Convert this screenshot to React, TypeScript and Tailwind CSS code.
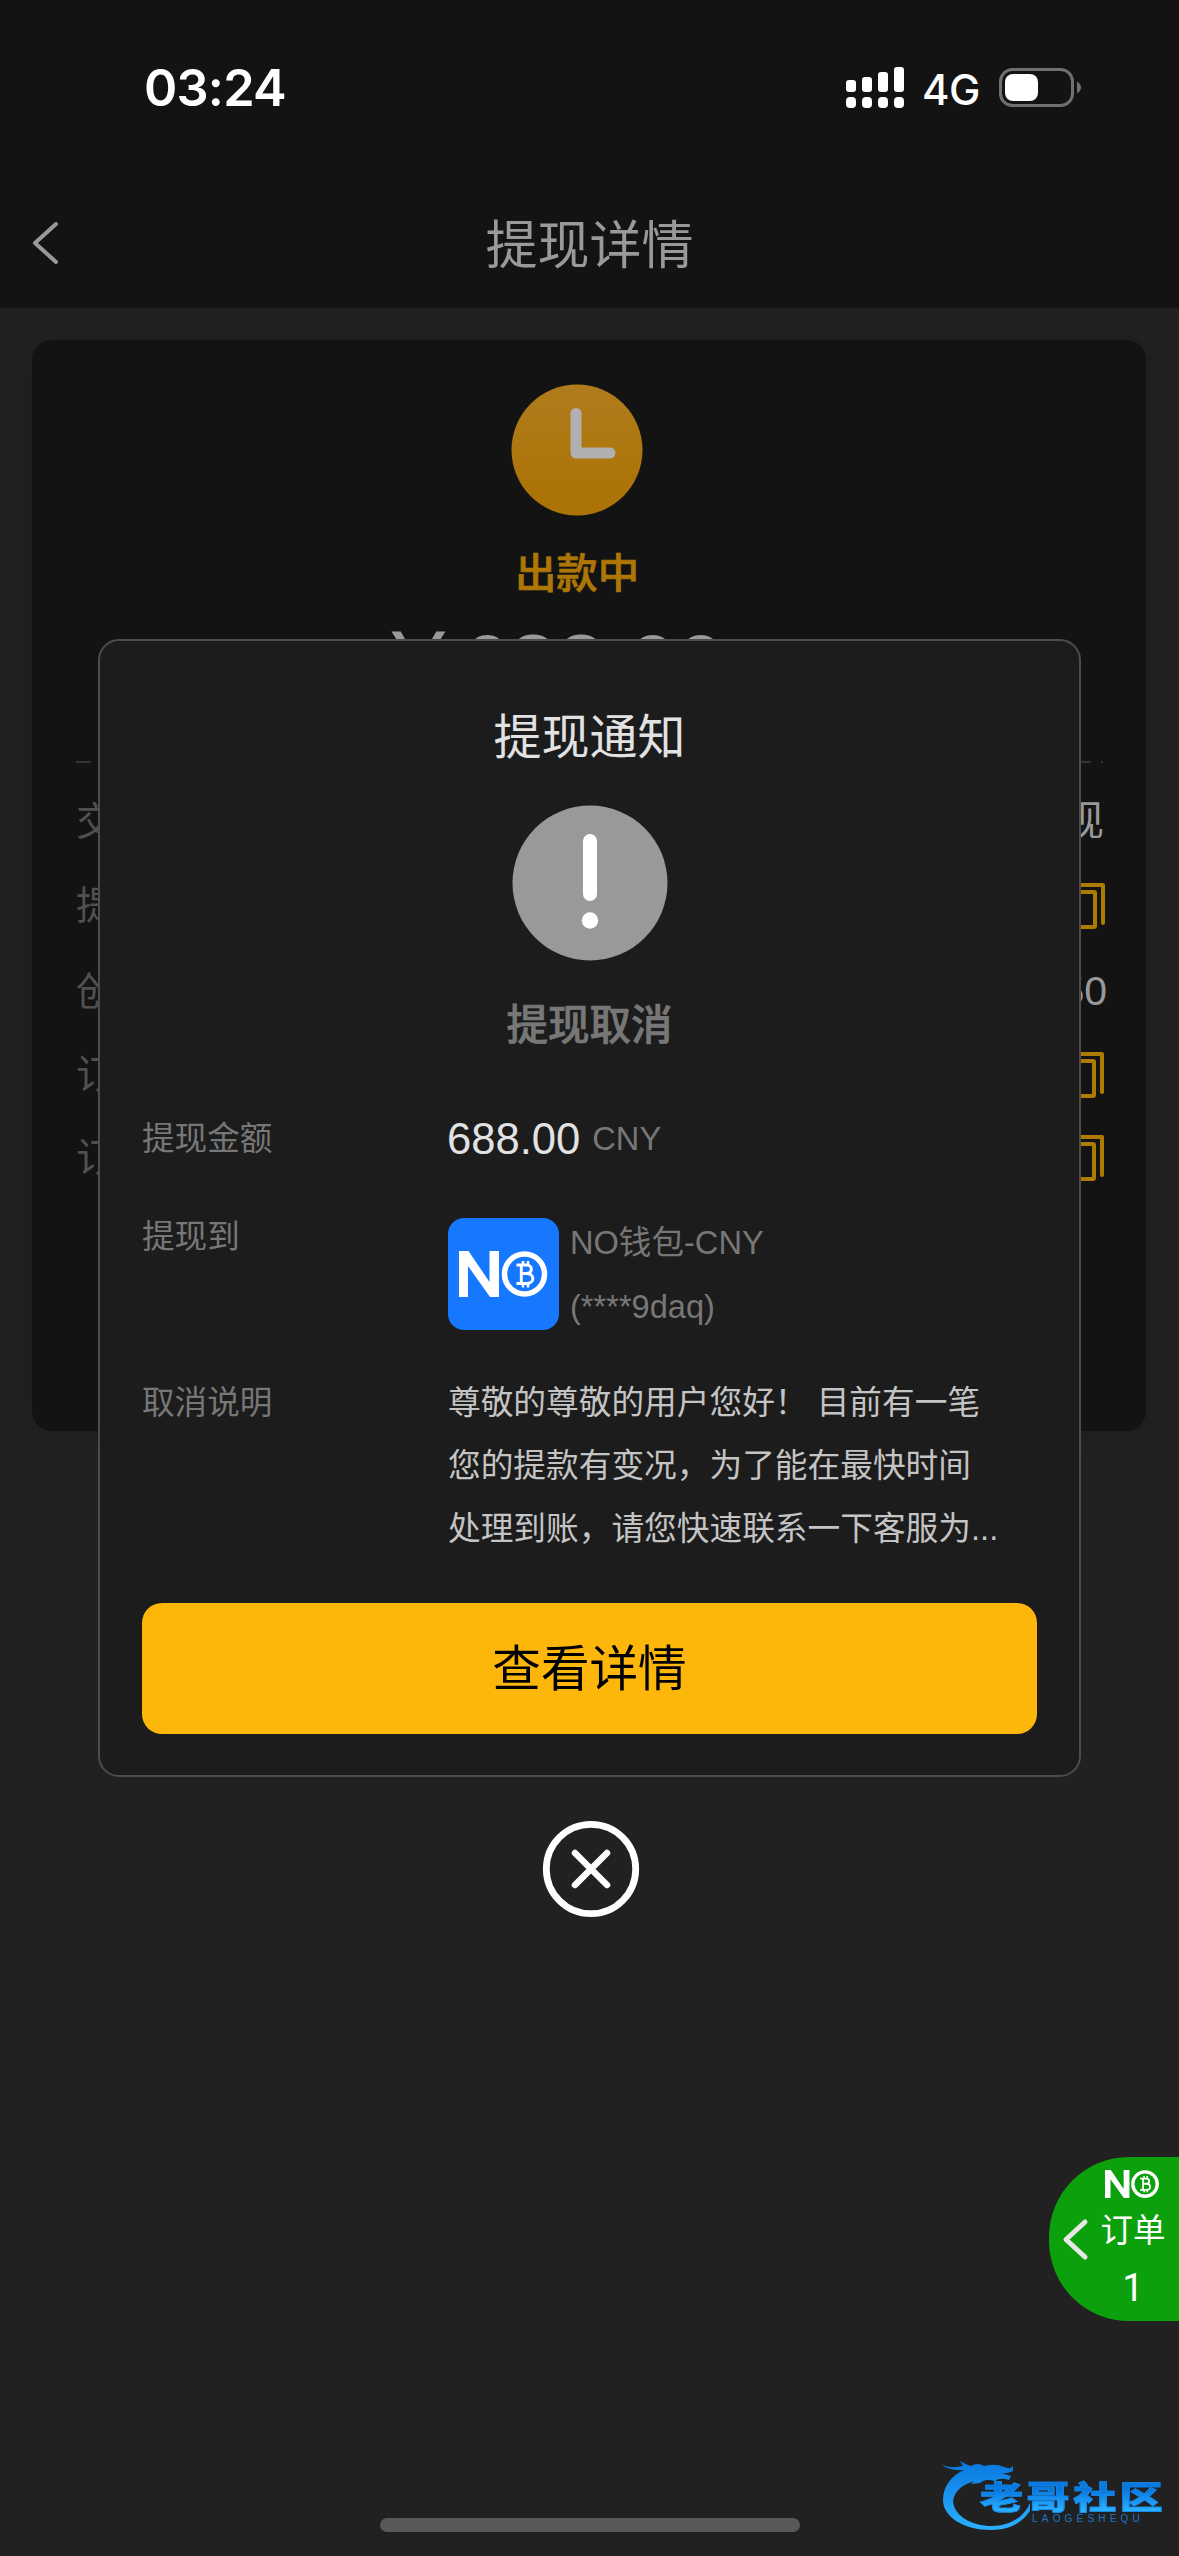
import React from "react";

const rows = [
  { id: "type", label: "交", value: "现", h: "h-[84px]", shift: "-mr-[2px]" },
  { id: "withdraw", label: "提", copy: true, h: "h-[84px]", shift: "-mr-[3px]" },
  { id: "created", label: "创", value: "50", h: "h-[88px]", shift: "-mr-[5px]" },
  { id: "order", label: "订", copy: true, h: "h-[78px]", shift: "-mr-[2px]" },
  { id: "serial", label: "订", copy: true, h: "h-[88px]", shift: "-mr-[2px]" },
];

function CopyIcon({ className }: { className: string }) {
  return (
    <svg className={className} width="40" height="48" viewBox="0 0 40 48" fill="none" stroke="#ad7b00" strokeWidth="4">
      <path d="M8 3H38V41" strokeLinejoin="round" strokeLinecap="round" />
      <rect x="2" y="10" width="28" height="35" rx="1" />
    </svg>
  );
}

function NoMark({ className }: { className: string }) {
  return (
    <svg viewBox="0 0 90 46" className={className} fill="none">
      <path d="M0 0H9.500L30.500 31V0H40V46H31L9 15V46H0Z" fill="#fff" />
      <circle cx="65.500" cy="23" r="20" stroke="#fff" strokeWidth="5.500" />
      <g stroke="#fff" strokeWidth="2.900">
        <path d="M57.500 14H67.500C74 14 74 22.500 67.500 22.500H62M67.500 22.500C76 22.500 76 32.500 67.500 32.500H57.500M62.300 14V32.500" />
        <path d="M64 10V14M69 10V14M64 32.500V36.500M69 32.500V36.500" strokeWidth="2.500" />
      </g>
    </svg>
  );
}

function StatusBar() {
  return (
    <div className="flex h-[186px] items-start">
      <div className="ml-[144px] mt-[57px] w-[150px] font-['Inter'] text-[50.500px] font-semibold leading-[62px] tracking-[-0.800px] text-white">03:24</div>
      <svg className="ml-[552px] mt-[66px]" width="58" height="43" viewBox="0 0 58 43" fill="#fff">
        <rect x="0" y="14" width="10" height="12" rx="3" />
        <rect x="16" y="11" width="10" height="15" rx="3" />
        <rect x="32" y="6" width="10" height="20" rx="3" />
        <rect x="48" y="1" width="10" height="25" rx="3" />
        <rect x="0" y="31" width="10" height="11" rx="4" />
        <rect x="16" y="31" width="10" height="11" rx="4" />
        <rect x="32" y="31" width="10" height="11" rx="4" />
        <rect x="48" y="31" width="10" height="11" rx="4" />
      </svg>
      <div className="ml-[18px] mt-[64px] w-[77px] font-['Inter'] text-[42px] font-medium leading-[51px] tracking-[-0.500px] text-white">4G</div>
      <svg className="mt-[67px]" width="84" height="42" viewBox="0 0 84 42">
        <rect x="1.500" y="2.500" width="72" height="36" rx="12" fill="none" stroke="#707070" strokeWidth="3" />
        <rect x="6" y="7" width="33" height="27" rx="8" fill="#fff" />
        <path d="M78 14.500Q82 17 82 20.500T78 26.500Z" fill="#707070" />
      </svg>
    </div>
  );
}

function Page() {
  return (
    <div className="flex h-full flex-col">
      <header className="h-[308px] bg-[#131313]">
        <StatusBar />
        <div className="grid h-[118px] grid-cols-[120px_1fr_120px] items-center">
          <svg className="-mt-[4px] ml-[31px]" width="28" height="46" viewBox="0 0 28 46" fill="none" stroke="#999" strokeWidth="4" strokeLinecap="round" strokeLinejoin="round">
            <path d="M25 4L4 23L25 42" />
          </svg>
          <h1 className="pt-[2px] text-center text-[52px] leading-[60px] text-[#999]">提现详情</h1>
        </div>
      </header>
      <section className="mx-[32px] mt-[32px] h-[1091px] w-[1114px] rounded-[20px] bg-[#131313] px-[44px] pt-[44px] shadow-[0_0_24px_rgba(0,0,0,0.12)]">
        <div className="mr-[24px] flex flex-col items-center">
          <svg width="132" height="132" viewBox="0 0 132 132">
            <defs>
              <linearGradient id="clock" x1="0" y1="0" x2="0" y2="1">
                <stop offset="0" stopColor="#b07c1c" />
                <stop offset="0.8" stopColor="#ac7408" />
              </linearGradient>
            </defs>
            <circle cx="66" cy="66" r="65.500" fill="url(#clock)" />
            <path d="M65 29.500V69H99" fill="none" stroke="#b0b0b0" strokeWidth="11" strokeLinecap="round" strokeLinejoin="round" />
          </svg>
          <div className="mt-[28px] text-[41.400px] font-medium leading-[60px] text-[#ad7607] [-webkit-text-stroke:0.7px_#ad7607]">出款中</div>
        </div>
        <div className="-mt-[1px] mr-[78px] h-[158px] whitespace-nowrap text-center text-[86px] leading-[122px] text-[#999]">￥688.00</div>
        <div className="h-[2px] w-[1027px] bg-[repeating-linear-gradient(90deg,#343434_0,#343434_15px,transparent_15px,transparent_24.400px)]" />
        <div className="mt-[17px]">
          {rows.map((r) => (
            <div key={r.id} className={`flex items-center justify-between text-[39px] ${r.h}`}>
              <span className="text-[#505050]">{r.label}</span>
              {r.copy ? <CopyIcon className={r.shift} /> : <span className={`text-[41px] text-[#999] ${r.shift}`}>{r.value}</span>}
            </div>
          ))}
        </div>
      </section>
    </div>
  );
}

function Dialog() {
  return (
    <div className="absolute inset-0 flex flex-col items-center pt-[639px]">
      <div className="flex h-[1138px] w-[983px] flex-col rounded-[21px] border-2 border-[#4c4c4c] bg-[#1c1c1c] px-[42px] pt-[67px]">
        <h2 className="text-center text-[48px] leading-[60px] text-[#e2e2e2]">提现通知</h2>
        <svg className="mt-[37px] self-center" width="156" height="156" viewBox="0 0 156 156">
          <circle cx="78" cy="78" r="77.500" fill="#999" />
          <rect x="71" y="29" width="14" height="67" rx="7" fill="#fff" />
          <circle cx="78" cy="115.500" r="8.200" fill="#fff" />
        </svg>
        <div className="mt-[35px] text-center text-[41.500px] font-medium leading-[60px] text-[#777] [-webkit-text-stroke:0.7px_#777]">提现取消</div>
        <div className="mt-[51px] grid grid-cols-[306px_1fr] text-[32.600px] leading-[64px] text-[#777]">
          <div className="h-[98px]">提现金额</div>
          <div className="flex h-[98px] items-start gap-[12px]">
            <span className="-ml-[1px] text-[43.600px] text-[#e2e2e2]">688.00</span>
            <span>CNY</span>
          </div>
          <div className="h-[166px]">提现到</div>
          <div className="flex h-[166px] items-start">
            <div className="mt-[13px] flex h-[112px] w-[111px] items-center justify-center rounded-[16px] bg-[#1677ff]">
              <NoMark className="w-[90px]" />
            </div>
            <div className="ml-[11px] mt-[6px]">
              <div>NO钱包-CNY</div>
              <div>(****9daq)</div>
            </div>
          </div>
          <div>取消说明</div>
          <div className="whitespace-nowrap text-[32.700px] leading-[63px] text-[#c4c4c4]">
            <p>尊敬的尊敬的用户您好！ 目前有一笔</p>
            <p>您的提款有变况，为了能在最快时间</p>
            <p>处理到账，请您快速联系一下客服为...</p>
          </div>
        </div>
        <button className="mt-[43px] h-[131px] w-full shrink-0 rounded-[20px] bg-[#fdb60a] pt-[2px] text-[48.600px] text-black">查看详情</button>
      </div>
      <svg className="ml-[3px] mt-[43px]" width="98" height="98" viewBox="0 0 98 98" fill="none" stroke="#fff">
        <circle cx="49" cy="49" r="44.700" strokeWidth="6.800" />
        <path d="M33 33L65 65M65 33L33 65" strokeWidth="6.500" strokeLinecap="round" />
      </svg>
    </div>
  );
}

function OrderTab() {
  return (
    <div className="absolute right-0 top-[2157px] flex h-[164px] w-[130px] items-center rounded-l-[80px] bg-[#0ca10c] text-[32.500px] text-white">
      <svg className="ml-[13px]" width="28" height="44" viewBox="0 0 28 44" fill="none" stroke="#e8e8e8" strokeWidth="5" strokeLinecap="round" strokeLinejoin="round">
        <path d="M23 5L4 22.500L23 40" />
      </svg>
      <div className="ml-[10px] flex h-full w-[66px] flex-col items-center pt-[13px]">
        <NoMark className="-ml-[2px] w-[55px]" />
        <div className="mt-[9px] leading-[48px]">订单</div>
        <div className="mt-[11px] font-['Roboto'] text-[38px] leading-[44px]">1</div>
      </div>
    </div>
  );
}

function CommunityMark() {
  return (
    <div className="absolute left-[938px] top-[2450px] h-[84px] w-[230px]">
      <svg className="absolute inset-0" width="100" height="84" viewBox="0 0 100 84">
        <defs>
          <linearGradient id="dragon" x1="0" y1="0" x2="0" y2="1">
            <stop offset="0" stopColor="#0878df" />
            <stop offset="1" stopColor="#2bb0ff" />
          </linearGradient>
        </defs>
        <path
          fill="url(#dragon)"
          d="M3 14Q10 19 25 16L22 11Q29 15 33 16Q40 12 46 16Q58 13 66 17Q74 20 75 15V21Q69 24 63 23L73 26L71 30Q62 27 57 31Q47 28 42 33L33 34L36 31Q17 37 15 51C16 66 34 76 54 76C72 76 86 67 92 53V61C83 74 70 80 53 80C26 80 5 67 5 50C5 36 14 25 26 20Q10 21 3 14Z"
        />
      </svg>
      <div className="absolute left-[42px] top-[20px] origin-center scale-y-[0.73] whitespace-nowrap bg-gradient-to-b from-[#0878df] from-30% to-[#2bb0ff] to-80% bg-clip-text text-[43px] font-black leading-[56px] tracking-[3.600px] text-transparent [-webkit-text-stroke:1px_#1488ee]">老哥社区</div>
      <div className="absolute left-[94px] top-[63px] font-['Liberation_Sans'] text-[10px] leading-[12px] tracking-[4.200px] text-[#1a78c8]">LAOGESHEQU</div>
    </div>
  );
}

export default function App() {
  return (
    <main className="relative h-[2556px] w-[1179px] overflow-hidden bg-[#212121] font-['Liberation_Sans','Noto_Sans_CJK_SC',sans-serif]">
      <Page />
      <Dialog />
      <OrderTab />
      <CommunityMark />
      <div className="absolute bottom-[24px] left-[380px] h-[14px] w-[420px] rounded-full bg-[#595959]" />
    </main>
  );
}
